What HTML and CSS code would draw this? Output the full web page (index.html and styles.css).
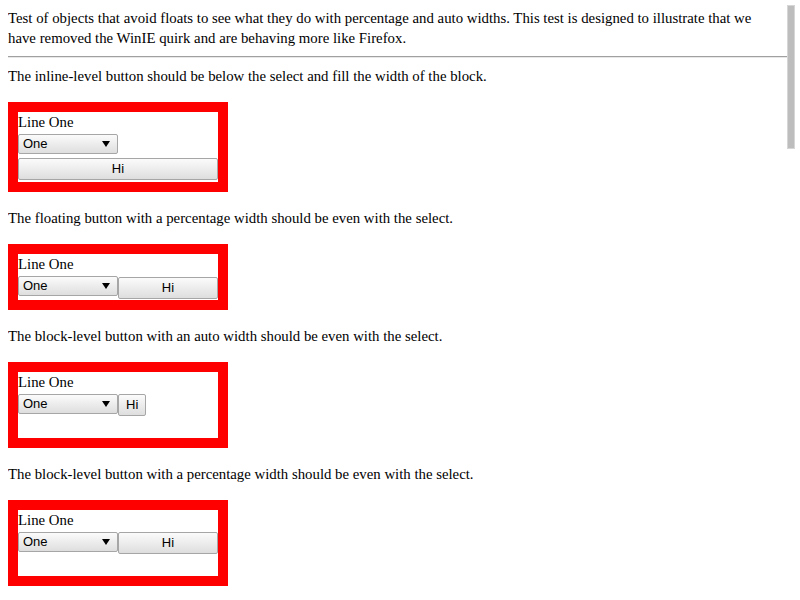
FILE: index.html
```html
<!DOCTYPE html>
<html>
<head>
<meta charset="utf-8">
<title>Objects avoiding floats</title>
<link rel="stylesheet" href="styles.css">
</head>
<body>
<div class="intro">Test of objects that avoid floats to see what they do with percentage and auto widths. This test is designed to illustrate that we have removed the WinIE quirk and are behaving more like Firefox.</div>
<hr class="rule">
<p class="note note-first">The inline-level button should be below the select and fill the width of the block.</p>
<div class="box box-stacked">
  <div class="line">Line One</div>
  <div class="controls">
    <span class="select">One<span class="arrow"></span></span>
  </div>
  <span class="button button-full">Hi</span>
</div>
<p class="note">The floating button with a percentage width should be even with the select.</p>
<div class="box box-float">
  <div class="line">Line One</div>
  <div class="controls">
    <span class="select">One<span class="arrow"></span></span>
    <span class="button button-half button-low">Hi</span>
  </div>
</div>
<p class="note">The block-level button with an auto width should be even with the select.</p>
<div class="box box-block">
  <div class="line">Line One</div>
  <div class="controls">
    <span class="select">One<span class="arrow"></span></span>
    <span class="button button-auto">Hi</span>
  </div>
</div>
<p class="note">The block-level button with a percentage width should be even with the select.</p>
<div class="box box-block">
  <div class="line">Line One</div>
  <div class="controls">
    <span class="select">One<span class="arrow"></span></span>
    <span class="button button-half">Hi</span>
  </div>
</div>
<div class="scrollbar"></div>
</body>
</html>
```
FILE: styles.css
```css
html, body {
  background: #ffffff;
}
body {
  margin: 8px;
  font-family: "Liberation Serif", "Times New Roman", serif;
  font-size: 14.8px;
  line-height: 20px;
  color: #000000;
}
.intro {
  margin: 0;
  padding-right: 24px;
}
.rule {
  margin: 8px 0;
  height: 0;
  border: 0;
  border-top: 1px solid #a0a0a0;
  border-bottom: 1px solid #e8e8e8;
}
.note {
  margin: 16px 0;
}
.note-first {
  margin-top: 8px;
}
.box {
  width: 200px;
  border: 10px solid #ff0000;
  background: #ffffff;
}
.line {
  height: 22px;
  line-height: 20px;
}
.box-stacked {
  padding-bottom: 2px;
}
.box-float {
  padding-bottom: 1px;
}
.box-block {
  height: 66px;
}
.controls {
  display: flex;
  align-items: flex-start;
}
.select,
.button {
  box-sizing: border-box;
  font-family: "Liberation Sans", Arial, sans-serif;
  font-size: 13px;
  color: #000000;
  border: 1px solid #a6a6a6;
  border-radius: 2px;
  background: linear-gradient(#fbfbfb, #dedede);
}
.select {
  position: relative;
  display: block;
  width: 100px;
  height: 20px;
  line-height: 18px;
  padding-left: 4px;
}
.arrow {
  position: absolute;
  right: 7px;
  top: 6px;
  width: 0;
  height: 0;
  border-left: 4px solid transparent;
  border-right: 4px solid transparent;
  border-top: 6px solid #000000;
}
.button {
  display: block;
  height: 22px;
  line-height: 20px;
  text-align: center;
}
.button-low {
  margin-top: 1px;
}
.button-full {
  width: 200px;
  margin-top: 4px;
}
.button-half {
  width: 100px;
}
.button-auto {
  padding: 0 7px;
}
.scrollbar {
  position: fixed;
  top: 5px;
  right: 5px;
  width: 8px;
  height: 144px;
  box-sizing: border-box;
  background: #bdbdbd;
  border: 1px solid #d6d6d6;
}
```
